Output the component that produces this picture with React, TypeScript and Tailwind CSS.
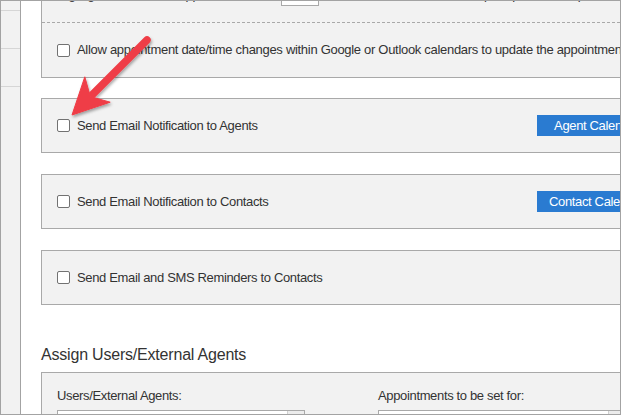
const Checkbox = () => (
  <span className="inline-block w-[13px] h-[13px] shrink-0 rounded-[2px] border border-[#727272] bg-white" />
);

function OptionPanel({ label, action }: { label: string; action?: string }) {
  return (
    <div className="w-[700px] h-[55px] shrink-0 flex items-center pl-[15px] pr-[36px] border border-[#a9a9a9] bg-[#f2f2f2]">
      <Checkbox />
      <span className="ml-[7px] text-[13px] tracking-[-0.35px] text-[#333] whitespace-nowrap">{label}</span>
      {action && (
        <button className="ml-auto w-[167px] h-[21px] shrink-0 bg-[#2a7bd1] text-white text-[13px] tracking-[-0.35px] whitespace-nowrap">
          {action}
        </button>
      )}
    </div>
  );
}

function SelectBox() {
  return (
    <div className="w-[248px] h-[26px] flex border border-[#a9a9a9] bg-white">
      <div className="flex-1" />
      <div className="w-[17px] bg-[#ececec] border-l border-[#d0d0d0]" />
    </div>
  );
}

function Pointer() {
  return (
    <svg className="absolute inset-0 pointer-events-none" width="621" height="415" viewBox="0 0 621 415">
      <defs>
        <filter id="arrowShadow" x="-20%" y="-20%" width="140%" height="140%">
          <feDropShadow dx="1" dy="2" stdDeviation="1.5" floodColor="#000" floodOpacity="0.35" />
        </filter>
      </defs>
      <g filter="url(#arrowShadow)" fill="#ef3e47" stroke="#ef3e47">
        <line x1="146" y1="39" x2="92" y2="93" strokeWidth="7.5" strokeLinecap="round" />
        <path d="M71 114 L83.8 75.8 L89.4 95.6 L109.2 101.2 Z" strokeWidth="1" strokeLinejoin="round" />
      </g>
    </svg>
  );
}

export default function App() {
  return (
    <div className="relative w-[621px] h-[415px] flex overflow-hidden border border-[#a3a3a3] bg-white font-['Liberation_Sans',Arial,sans-serif] text-[#333]">
      {/* left rail */}
      <aside className="w-[20px] shrink-0 flex flex-col bg-[#f2f2f2] border-r border-[#a3a3a3]">
        <div className="h-[10px] border-b border-[#d6d6d6]" />
        <div className="h-[38px] border-b border-[#d6d6d6]" />
        <div className="h-[38px] border-b border-[#d6d6d6]" />
      </aside>

      <main className="flex-1 flex flex-col pl-[20px]">
        {/* calendar sync settings */}
        <div className="w-[700px] shrink-0 -mt-[22px] border border-[#a9a9a9] bg-[#f2f2f2]">
          <div className="h-[43px] pt-[4px] pl-[15px] border-b border-dashed border-[#a9a9a9]">
            <div className="h-[22px] flex items-center text-[13px] tracking-[-0.35px] whitespace-nowrap">
              <span className="w-[224px]">Highlight unconfirmed appointments older than</span>
              <span className="w-[38px] h-[22px] border border-[#a9a9a9] bg-white" />
              <span className="ml-[6px]">hours before the start time to prompt a follow-up</span>
            </div>
          </div>
          <div className="h-[54px] flex items-center pl-[15px]">
            <Checkbox />
            <span className="ml-[7px] text-[13px] tracking-[-0.3px] whitespace-nowrap">
              Allow appointment date/time changes within Google or Outlook calendars to update the appointment record
            </span>
          </div>
        </div>

        <div className="mt-[20px]">
          <OptionPanel label="Send Email Notification to Agents" action="Agent Calendar Settings" />
        </div>
        <div className="mt-[21px]">
          <OptionPanel label="Send Email Notification to Contacts" action="Contact Calendar Settings" />
        </div>
        <div className="mt-[21px]">
          <OptionPanel label="Send Email and SMS Reminders to Contacts" />
        </div>

        <h2 className="mt-[39px] h-[22px] leading-[22px] text-[16px] tracking-[-0.2px] whitespace-nowrap">
          Assign Users/External Agents
        </h2>

        <div className="w-[700px] shrink-0 mt-[6px] pt-[15px] pl-[15px] flex border border-[#a9a9a9] bg-[#f2f2f2]">
          <div className="w-[321px] flex flex-col">
            <span className="h-[16px] leading-[16px] text-[13px] tracking-[-0.35px]">Users/External Agents:</span>
            <div className="mt-[6px]">
              <SelectBox />
            </div>
          </div>
          <div className="w-[321px] flex flex-col">
            <span className="h-[16px] leading-[16px] text-[13px] tracking-[-0.35px]">Appointments to be set for:</span>
            <div className="mt-[6px]">
              <SelectBox />
            </div>
          </div>
        </div>
      </main>

      <Pointer />
    </div>
  );
}
